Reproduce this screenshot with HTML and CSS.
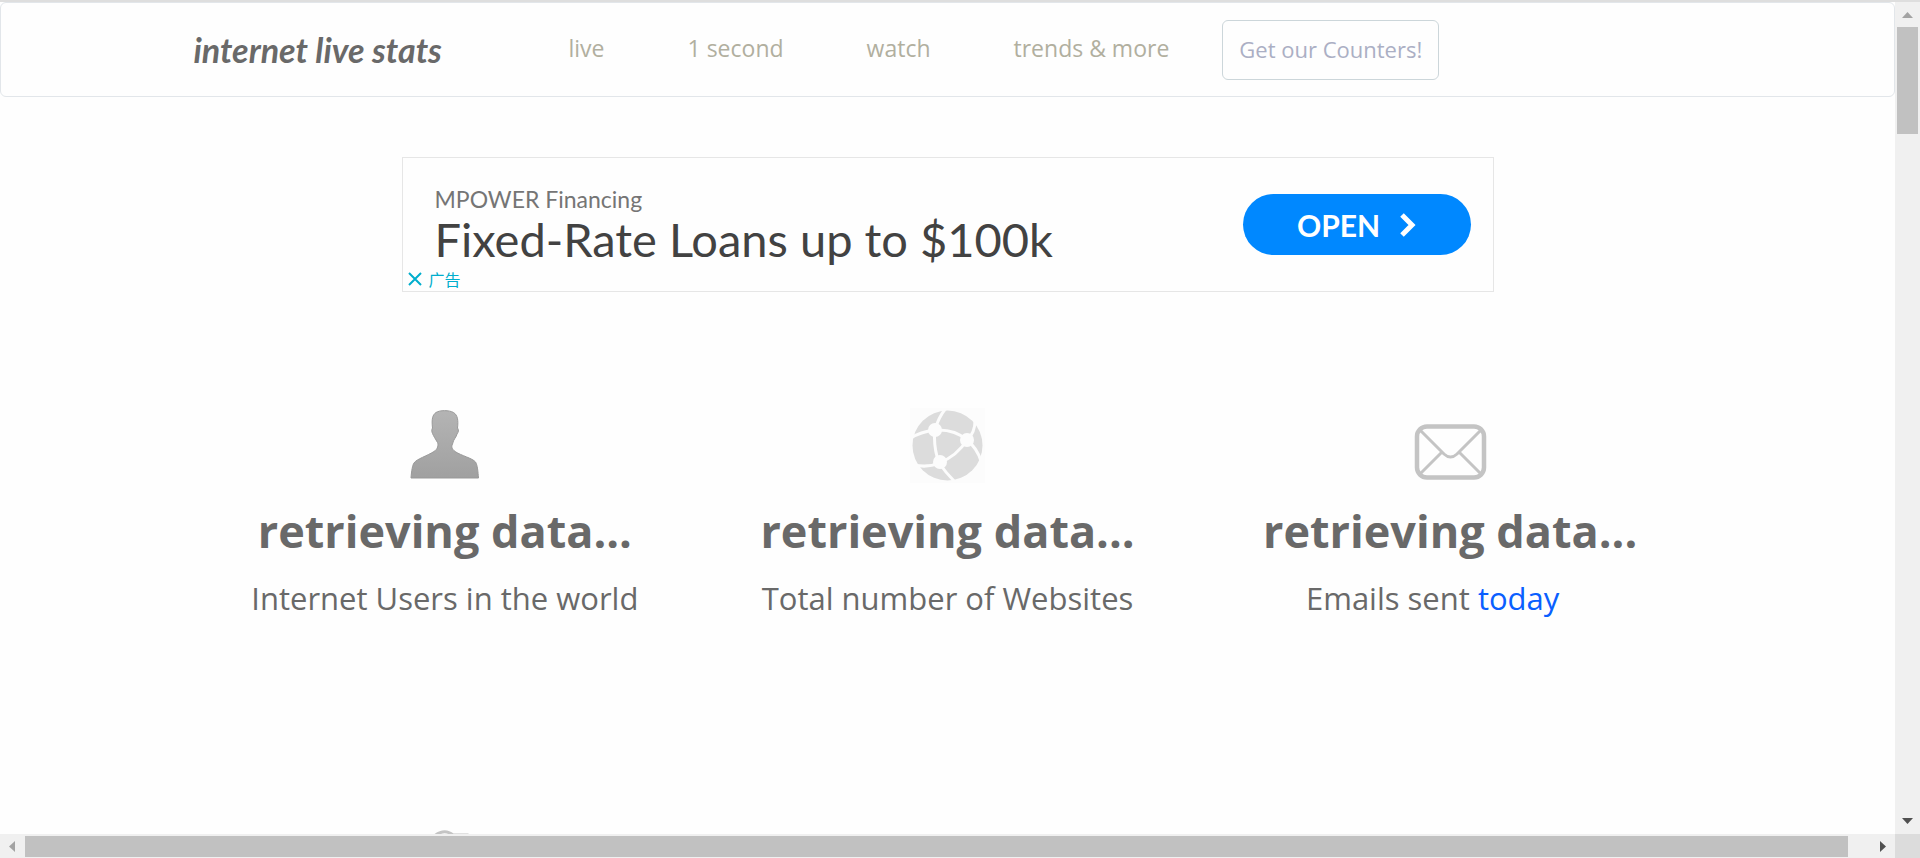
FILE: index.html
```html
<!DOCTYPE html>
<html lang="en">
<head>
<meta charset="utf-8">
<title>Internet Live Stats</title>
<link rel="stylesheet" href="styles.css">
</head>
<body>
<div class="window">
  <div class="page">
    <header class="navbar">
      <div class="navbar-inner">
        <a class="brand" href="#">internet live stats</a>
        <nav class="nav">
          <a href="#">live</a>
          <a href="#">1 second</a>
          <a href="#">watch</a>
          <a href="#">trends &amp; more</a>
        </nav>
        <button class="counters" type="button">Get our Counters!</button>
      </div>
    </header>

    <aside class="ad">
      <div class="ad-copy">
        <span class="ad-brand">MPOWER Financing</span>
        <span class="ad-title">Fixed-Rate Loans up to $100k</span>
      </div>
      <button class="ad-open" type="button">OPEN
        <svg width="16" height="26" viewBox="0 0 16 26"><path d="M2 3l10 10L2 23" fill="none" stroke="#fff" stroke-width="5"/></svg>
      </button>
      <div class="ad-choices">
        <svg width="14" height="14" viewBox="0 0 14 14"><path d="M1 1l12 12M13 1L1 13" fill="none" stroke="#00aecd" stroke-width="2"/></svg>
        <span lang="zh">广告</span>
      </div>
    </aside>

    <main class="stats">
      <section class="stat">
        <div class="stat-icon">
          <svg width="75" height="75" viewBox="0 0 75 75">
            <defs><linearGradient id="person" x1="0" y1="0" x2="0" y2="1"><stop offset="0" stop-color="#b4b4b4"/><stop offset="1" stop-color="#a0a0a0"/></linearGradient></defs>
            <path d="M4 70C4.500 63 5.500 57 7 55C9.500 51 20 48 27 43.500C31 41 31.500 37 30.500 34.500C28.500 31 26.500 28 25.500 25.500C24.500 23 24.500 22 25.500 20C24.500 11 25.500 7 29 4.500C33 2 42 2 46.500 4.500C50.500 7 51.500 12 50.500 20C52 22 51.500 24 50 26C49.500 29 46.500 31 45.500 36C44 39 45 41 48 43.500C55 48 65 50 68.500 54C70.500 57 71 64 71.500 70Z" fill="url(#person)" stroke="#999" stroke-width="1"/>
          </svg>
        </div>
        <h2>retrieving data...</h2>
        <p>Internet Users in the world</p>
      </section>
      <section class="stat">
        <div class="stat-icon">
          <svg width="75" height="75" viewBox="0 0 75 75">
            <rect width="75" height="75" fill="#fcfcfc"/>
            <circle cx="37.500" cy="37.500" r="35" fill="#dcdcdc"/>
            <g fill="none" stroke="#fcfcfc" stroke-width="3">
              <path d="M36 0Q28 10 25 22M25 22Q10 24 1 30M25 22Q45 21 57 32M25 22Q23 38 29 55M29 55Q47 48 57 32M57 32Q66 24 65 9M57 32Q67 40 71 53M29 55Q18 60 4 57M29 55Q36 65 46 75"/>
            </g>
            <g fill="#fcfcfc"><circle cx="25" cy="22" r="7"/><circle cx="57" cy="32" r="7"/><circle cx="30" cy="54" r="7"/></g>
          </svg>
        </div>
        <h2>retrieving data...</h2>
        <p>Total number of Websites</p>
      </section>
      <section class="stat">
        <div class="stat-icon">
          <svg width="75" height="75" viewBox="0 0 75 75">
            <g fill="none" stroke="#c4c4c4">
              <rect x="4" y="18.500" width="67" height="51" rx="10" stroke-width="4.500"/>
              <path d="M6 21L31 46Q37.500 52 44 46L69 21M6 67L29 44M69 67L46 44" stroke-width="3"/>
            </g>
          </svg>
        </div>
        <h2>retrieving data...</h2>
        <p class="with-period">Emails sent <a href="#">today</a></p>
      </section>
      <section class="stat">
        <div class="stat-icon">
          <svg width="75" height="75" viewBox="0 0 75 75">
            <path d="M24 10Q36-2 46 6L60 6V65H24Z" fill="none" stroke="#c4c4c4" stroke-width="3"/>
          </svg>
        </div>
      </section>
    </main>
  </div>

  <div class="scroll scroll-y">
    <svg class="arrow" viewBox="0 0 25 25"><path d="M7 16L12.500 10L18 16Z" fill="#a3a3a3"/></svg>
    <div class="track"><div class="thumb"></div></div>
    <svg class="arrow" viewBox="0 0 25 25"><path d="M7 9L12.500 15L18 9Z" fill="#505050"/></svg>
  </div>
  <div class="scroll scroll-x">
    <svg class="arrow" viewBox="0 0 25 25"><path d="M15 7L9 12.500L15 18Z" fill="#a3a3a3"/></svg>
    <div class="track"><div class="thumb"></div></div>
    <svg class="arrow" viewBox="0 0 25 25"><path d="M10 7L16 12.500L10 18Z" fill="#505050"/></svg>
  </div>
  <div class="corner"></div>
</div>
</body>
</html>
```
FILE: styles.css
```css
* { box-sizing: border-box; }

body {
  margin: 0;
  background: #fefefe;
  color: #696969;
  font-family: "Open Sans", "Noto Sans", sans-serif;
}

a { color: inherit; text-decoration: none; }
button { font: inherit; cursor: pointer; }

.window {
  display: grid;
  grid-template: minmax(0, 1fr) 24px / minmax(0, 1fr) 25px;
  height: 100vh;
  border-top: 2px solid #dedede;
}

.page { overflow: hidden; }

.navbar {
  border: 1px solid #e2e6ea;
  border-radius: 6px;
}

.navbar-inner {
  display: flex;
  align-items: center;
  max-width: 1508px;
  margin: 0 auto;
  padding: 17px 0 16px;
}

.brand {
  width: 375px;
  font: italic 700 34px/40px Lato, sans-serif;
}

.nav {
  display: flex;
  gap: 83px;
  padding-bottom: 4px;
  font-size: 23px;
  line-height: 32px;
  color: #b1af9f;
}

.counters {
  height: 60px;
  margin-left: 53px;
  padding: 0 16px 2px;
  border: 1px solid #ccd6da;
  border-radius: 6px;
  background: none;
  color: #abafc4;
  font-size: 22px;
}

.ad {
  position: relative;
  display: flex;
  align-items: center;
  justify-content: space-between;
  max-width: 1092px;
  height: 135px;
  margin: 60px auto 0;
  padding: 0 22px 0 32px;
  border: 1px solid #e6e6e6;
  font-family: Lato, sans-serif;
}

.ad-copy { display: flex; flex-direction: column; }
.ad-brand { font-size: 23px; line-height: 28px; color: #757575; }
.ad-title { font-size: 47px; line-height: 52px; color: #424242; }

.ad-open {
  display: flex;
  align-items: center;
  justify-content: center;
  gap: 20px;
  width: 228px;
  height: 61px;
  border: 0;
  border-radius: 31px;
  background: #08f;
  color: #fff;
  font-size: 30px;
  font-weight: 700;
}

.ad-choices {
  position: absolute;
  left: 5px;
  bottom: 2px;
  display: flex;
  align-items: center;
  gap: 7px;
  color: #00aecd;
  font: 16px/20px "Noto Sans CJK SC", sans-serif;
}

.stats {
  display: grid;
  grid-template-columns: repeat(3, 1fr);
  row-gap: 207px;
  max-width: 1508px;
  margin: 116px auto 0;
  text-align: center;
}

.stat-icon { display: flex; justify-content: center; }
.stat h2 { margin: 14px 0 0; font-size: 45px; line-height: 68px; }
.stat p { margin: 9px 0 0; font-size: 31px; line-height: 48px; }
.stat p a { color: #0a5fff; }
.stat .with-period { padding-right: 35px; }

.scroll { display: flex; background: #f0f0f0; }
.scroll-y { flex-direction: column; }
.arrow { flex: none; width: 25px; height: 25px; }
.track { display: flex; flex: 1; }
.thumb { background: #c1c1c1; }
.scroll-y .track { flex-direction: column; padding: 0 2px; }
.scroll-y .thumb { height: 13.7%; }
.scroll-x .track { padding: 2px 0 1px; }
.scroll-x .thumb { width: 98.8%; }
.corner { background: #dcdcdc; }
```
